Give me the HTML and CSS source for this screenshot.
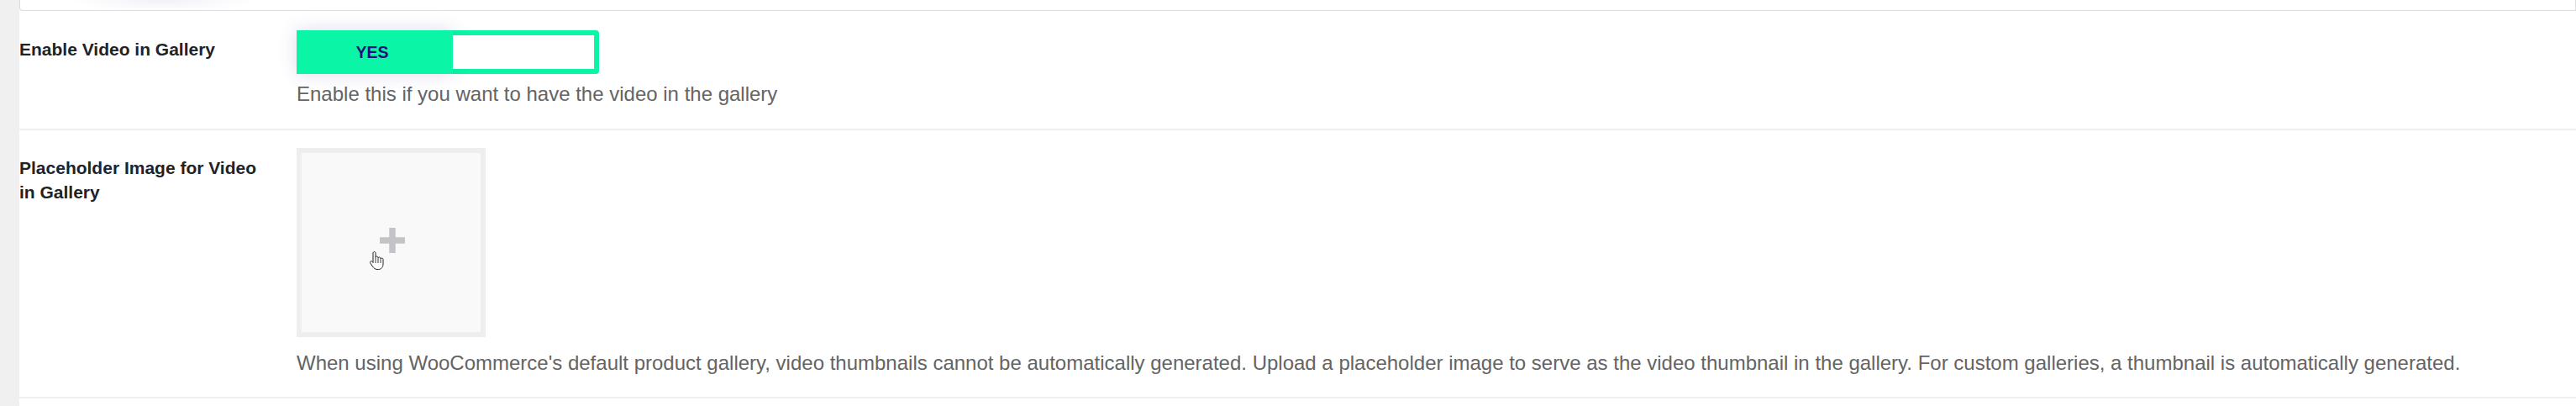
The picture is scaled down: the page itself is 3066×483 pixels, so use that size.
FILE: index.html
```html
<!DOCTYPE html>
<html lang="en">
<head>
<meta charset="utf-8">
<title>Video Gallery Settings</title>
<link rel="stylesheet" href="styles.css">
</head>
<body>
<div class="wrap">
  <div class="prev-card"></div>
  <div class="row">
    <div class="label">Enable Video in Gallery</div>
    <div class="field">
      <div class="toggle">
        <div class="knob">YES</div>
        <div class="off"></div>
      </div>
      <p class="desc">Enable this if you want to have the video in the gallery</p>
    </div>
  </div>
  <div class="row">
    <div class="label">Placeholder Image for Video in Gallery</div>
    <div class="field">
      <div class="uploader">
        <svg class="plus" width="30" height="30" viewBox="0 0 30 30" aria-hidden="true">
          <rect x="11.25" y="0" width="7.5" height="30" fill="#c3c4c7"/>
          <rect x="0" y="11.25" width="30" height="7.5" fill="#c3c4c7"/>
        </svg>
        <svg class="cursor" width="18" height="24" viewBox="0 0 18 24" aria-hidden="true">
          <path d="M5 14.5 V3 C5 2.2 5.7 1.5 6.5 1.5 C7.3 1.5 8 2.2 8 3 V8.5 C8 7.7 8.7 7 9.5 7 C10.3 7 11 7.7 11 8.5 V9.5 C11 8.7 11.7 8 12.5 8 C13.3 8 14 8.7 14 9.5 V10.5 C14 9.7 14.7 9 15.5 9 C16.3 9 17 9.7 17 10.5 V16 C17 19.5 15 22.5 11.5 22.5 H10 C7.5 22.5 6 21 4.5 19 L1.8 15 C1.3 14.2 1.5 13.3 2.2 12.9 C2.9 12.5 3.8 12.7 4.3 13.4 Z" fill="#fff" stroke="#1d2327" stroke-width="1" stroke-linejoin="round"/>
          <path d="M11 10 V15 M14 11 V15 M8 9 V15" stroke="#1d2327" stroke-width="0.9" fill="none"/>
        </svg>
      </div>
      <p class="desc">When using WooCommerce's default product gallery, video thumbnails cannot be automatically generated. Upload a placeholder image to serve as the video thumbnail in the gallery. For custom galleries, a thumbnail is automatically generated.</p>
    </div>
  </div>
</div>
</body>
</html>
```
FILE: styles.css
```css
html, body {
  margin: 0;
  padding: 0;
}
body {
  background: #f0f0f1;
  font-family: "Liberation Sans", Arial, sans-serif;
  color: #1d2327;
}
.wrap {
  margin-left: 23px;
  background: #fff;
  min-height: 483px;
}
.prev-card {
  height: 12px;
  border: 1px solid #dcdcde;
  border-top: none;
  border-radius: 0 0 0 4px;
  background: radial-gradient(ellipse 110px 14px at 170px 0, rgba(70, 50, 150, 0.07), rgba(70, 50, 150, 0) 100%) #fff;
}
.row {
  display: flex;
  border-bottom: 2px solid #f0f0f1;
}
.label {
  width: 306px;
  flex: none;
  margin-right: 24px;
  padding: 31px 0 0 0;
  font-size: 21px;
  font-weight: bold;
  line-height: 29px;
}
.row + .row .label {
  padding-top: 30px;
}
.field {
  flex: 1;
  padding: 23px 0 23px 0;
}
.row + .row .field {
  padding-top: 21px;
  padding-bottom: 22px;
}
.toggle {
  display: flex;
  width: 360px;
  height: 52px;
  background: #0af5a6;
  border-radius: 0 4px 4px 0;
  margin-bottom: 6px;
}
.knob {
  width: 180px;
  padding-right: 6px;
  flex: none;
  display: flex;
  align-items: center;
  justify-content: center;
  background: #0af5a6;
  color: #22107a;
  font-weight: bold;
  font-size: 19.5px;
  box-shadow: 0 0 22px rgba(60, 40, 140, 0.16);
}
.off {
  flex: 1;
  margin: 6px 6px 6px 0;
  background: #fff;
}
.desc {
  margin: 0;
  font-size: 24px;
  line-height: 1.5;
  color: #646464;
}
.uploader {
  position: relative;
  width: 213px;
  height: 213px;
  border: 6px solid #eeeeee;
  background: #f9f9f9;
  display: flex;
  align-items: center;
  justify-content: center;
  margin-bottom: 13px;
}
.plus {
  display: block;
  margin: -6px 0 0 2px;
}
.cursor {
  position: absolute;
  left: 80px;
  top: 116px;
}
```
